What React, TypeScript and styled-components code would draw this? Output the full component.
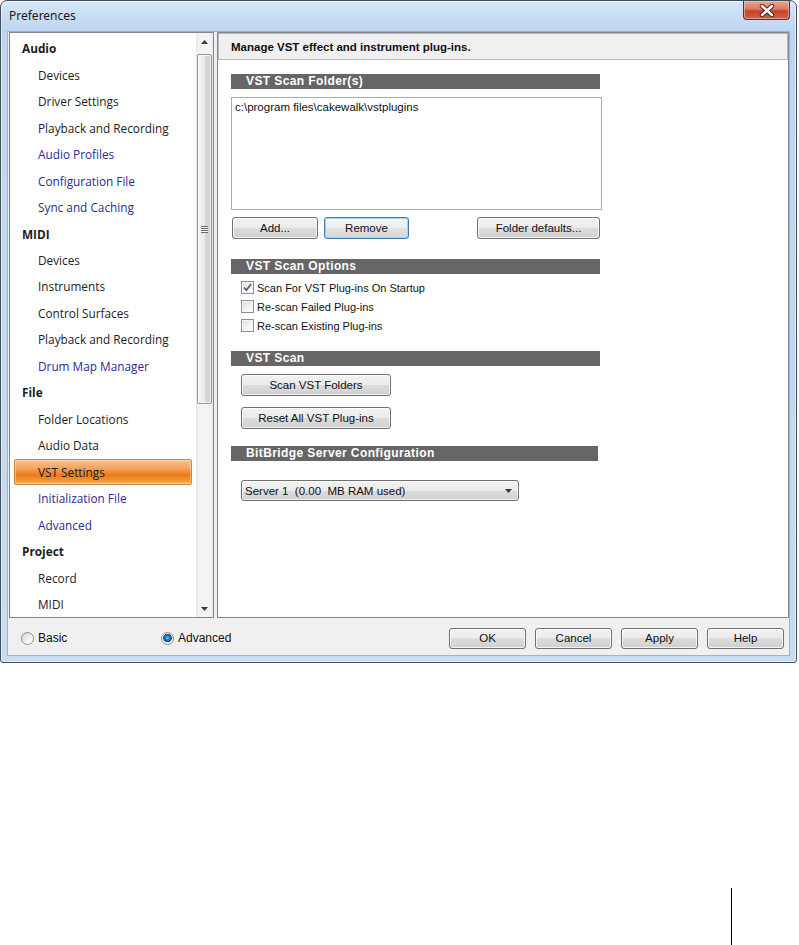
import React from "react";
import styled, { createGlobalStyle } from "styled-components";

const GlobalStyle = createGlobalStyle`
  html, body {
    margin: 0;
    padding: 0;
    background: #ffffff;
    overflow: hidden;
  }
  body {
    font-family: "Liberation Sans", Arial, sans-serif;
  }
`;

const Page = styled.div`
  width: 799px;
  height: 945px;
  display: flex;
  flex-direction: column;
`;

const Window = styled.div`
  width: 797px;
  height: 663px;
  box-sizing: border-box;
  border: 1px solid #3f4e5f;
  border-radius: 7px 7px 3px 3px;
  background: linear-gradient(180deg, #d6e7f8 0px, #bdd6f0 30px, #c6dcf2 100%);
  box-shadow: inset 0 0 0 1px rgba(255, 255, 255, 0.55);
  display: flex;
  flex-direction: column;
`;

const TitleBar = styled.div`
  height: 30px;
  display: flex;
  align-items: flex-start;
  justify-content: space-between;
  padding-left: 8px;
`;

const Title = styled.span`
  font: 12px "Noto Sans", "Open Sans", sans-serif;
  color: #1a1a1a;
  line-height: 29px;
`;

const CloseButton = styled.div`
  width: 47px;
  height: 19px;
  margin-right: 6px;
  box-sizing: border-box;
  border: 1px solid #6b2a22;
  border-top: none;
  border-radius: 0 0 4px 4px;
  background: linear-gradient(180deg, #e8a897 0%, #d77a63 45%, #c5432c 55%, #d0634a 100%);
  box-shadow: inset 0 0 0 1px rgba(255, 210, 200, 0.5);
  display: flex;
  align-items: center;
  justify-content: center;
`;

const Client = styled.div`
  flex: 1;
  margin: 0 6px 6px 6px;
  border: 1px solid #9fb3c9;
  background: #f0f0f0;
  display: flex;
  flex-direction: column;
`;

const Main = styled.div`
  height: 586px;
  display: flex;
  gap: 3px;
  padding-left: 1px;
`;

const TreePanel = styled.div`
  width: 205px;
  box-sizing: border-box;
  border: 1px solid #828790;
  background: #ffffff;
  display: flex;
`;

const TreeList = styled.div`
  flex: 1;
  padding-top: 2px;
  display: flex;
  flex-direction: column;
`;

const TreeRow = styled.div<{ $header?: boolean; $link?: boolean; $selected?: boolean }>`
  height: 26.48px;
  flex-shrink: 0;
  box-sizing: border-box;
  display: flex;
  align-items: center;
  font-family: "Open Sans", "Noto Sans", sans-serif;
  font-size: 11.8px;
  font-weight: ${(p) => (p.$header ? 700 : 400)};
  color: ${(p) => (p.$link ? "#2a2a96" : "#1c1c1c")};
  padding-left: ${(p) => (p.$header ? 12 : 28)}px;
  ${(p) =>
    p.$selected &&
    `
    margin: 0 4px 0 4px;
    padding-left: 23px;
    border: 1px solid #c9874c;
    border-radius: 2px;
    background: linear-gradient(180deg, #fac596 0%, #f4a25c 35%, #eb7a1a 62%, #f29535 85%, #f8b56c 100%);
    box-shadow: inset 0 0 0 1px rgba(255, 230, 200, 0.45);
  `}
`;

const ScrollBar = styled.div`
  width: 17px;
  background: linear-gradient(90deg, #e6e6e6 0%, #f4f4f4 20%, #f4f4f4 80%, #e9e9e9 100%);
  display: flex;
  flex-direction: column;
`;

const ScrollArrow = styled.div`
  height: 17px;
  display: flex;
  align-items: center;
  justify-content: center;
`;

const ScrollTrack = styled.div`
  flex: 1;
  padding-top: 4px;
  display: flex;
  flex-direction: column;
`;

const Thumb = styled.div`
  height: 350px;
  margin: 0 1px;
  box-sizing: border-box;
  border: 1px solid #979797;
  border-radius: 2px;
  background: linear-gradient(90deg, #f3f3f3 0%, #e9e9e9 50%, #d8d8d8 51%, #cfcfcf 100%);
  box-shadow: inset 0 0 0 1px rgba(255, 255, 255, 0.7);
  display: flex;
  align-items: center;
  justify-content: center;
`;

const Grip = styled.div`
  width: 7px;
  height: 7px;
  background: repeating-linear-gradient(180deg, #6a6a6a 0px, #6a6a6a 1px, #f4f4f4 1px, #f4f4f4 2px);
`;

const ContentPanel = styled.div`
  flex: 1;
  box-sizing: border-box;
  border: 1px solid #828790;
  background: #ffffff;
  display: flex;
  flex-direction: column;
`;

const PanelHeader = styled.div`
  height: 27px;
  box-sizing: border-box;
  border: 1px solid #b9b9b9;
  background: #f0f0f0;
  padding-left: 12px;
  display: flex;
  align-items: center;
  font: bold 11.5px "Liberation Sans", Arial, sans-serif;
  color: #111111;
`;

const PanelBody = styled.div`
  padding: 14px 0 0 13px;
  display: flex;
  flex-direction: column;
  align-items: flex-start;
`;

const SectionBar = styled.div<{ $w?: number; $mt?: number }>`
  width: ${(p) => p.$w ?? 369}px;
  height: 15px;
  margin-top: ${(p) => p.$mt ?? 0}px;
  box-sizing: border-box;
  padding-left: 15px;
  background: #666666;
  color: #ffffff;
  font: bold 12px "Liberation Sans", Arial, sans-serif;
  letter-spacing: 0.4px;
  line-height: 15px;
`;

const ListBox = styled.div`
  width: 371px;
  height: 113px;
  margin-top: 8px;
  box-sizing: border-box;
  border: 1px solid #a5acb5;
  padding: 3px 3px;
  font: 11.5px "Liberation Sans", Arial, sans-serif;
  color: #111111;
`;

const ButtonRow = styled.div`
  width: 369px;
  margin-top: 7px;
  display: flex;
  gap: 6px;
`;

const Spacer = styled.div`
  flex: 1;
`;

const Button = styled.div<{ $w: number; $h?: number; $focused?: boolean; $mt?: number; $ml?: number }>`
  width: ${(p) => p.$w}px;
  height: ${(p) => p.$h ?? 22}px;
  margin-top: ${(p) => p.$mt ?? 0}px;
  margin-left: ${(p) => p.$ml ?? 0}px;
  flex-shrink: 0;
  box-sizing: border-box;
  border: 1px solid ${(p) => (p.$focused ? "#3d7bad" : "#707070")};
  border-radius: 3px;
  background: ${(p) =>
    p.$focused
      ? "linear-gradient(180deg, #f6f6f6 0%, #eeeeee 50%, #e2e2e2 50%, #d6d6d6 100%)"
      : "linear-gradient(180deg, #f2f2f2 0%, #ebebeb 50%, #dddddd 50%, #cfcfcf 100%)"};
  box-shadow: inset 0 0 0 1px ${(p) => (p.$focused ? "#9fd6f4" : "rgba(255, 255, 255, 0.75)")};
  display: flex;
  align-items: center;
  justify-content: center;
  font: 11.5px "Liberation Sans", Arial, sans-serif;
  color: #111111;
`;

const CheckList = styled.div`
  margin-top: 4px;
  padding-left: 10px;
  display: flex;
  flex-direction: column;
`;

const CheckRow = styled.div`
  height: 19px;
  display: flex;
  align-items: center;
  gap: 3px;
  font: 11px "Liberation Sans", Arial, sans-serif;
  color: #111111;
`;

const CheckBox = styled.div`
  width: 13px;
  height: 13px;
  box-sizing: border-box;
  border: 1px solid #8e8f8f;
  background: linear-gradient(135deg, #dcdcdc 0%, #f4f4f4 60%, #ffffff 100%);
  box-shadow: inset 0 0 0 1px #f4f4f4;
  display: flex;
  align-items: center;
  justify-content: center;
`;

const Select = styled.div`
  width: 278px;
  height: 21px;
  margin: 19px 0 0 10px;
  box-sizing: border-box;
  border: 1px solid #707070;
  border-radius: 3px;
  background: linear-gradient(180deg, #f2f2f2 0%, #ebebeb 50%, #dddddd 50%, #cfcfcf 100%);
  box-shadow: inset 0 0 0 1px rgba(255, 255, 255, 0.75);
  padding: 0 6px 0 3px;
  display: flex;
  align-items: center;
  justify-content: space-between;
  font: 11.5px "Liberation Sans", Arial, sans-serif;
  color: #111111;
  white-space: pre;
`;

const Footer = styled.div`
  flex: 1;
  display: flex;
  align-items: center;
  padding: 3px 5px 0 13px;
  gap: 9px;
`;

const RadioLabel = styled.div<{ $w?: number }>`
  width: ${(p) => (p.$w ? `${p.$w}px` : "auto")};
  display: flex;
  align-items: center;
  gap: 4px;
  font: 12px "Liberation Sans", Arial, sans-serif;
  color: #111111;
`;

const Radio = styled.div<{ $on?: boolean }>`
  width: 13px;
  height: 13px;
  box-sizing: border-box;
  border-radius: 50%;
  border: 1px solid #8e8f8f;
  background: ${(p) =>
    p.$on
      ? "radial-gradient(circle at 50% 45%, #6ec0f0 0px, #1d6fb8 2.5px, #0f4f8a 4px, #e6e6e6 4.5px, #f6f6f6 6px)"
      : "linear-gradient(135deg, #d6d6d6 0%, #f2f2f2 60%, #ffffff 100%)"};
`;

const Stroke = styled.div`
  margin: 225px 0 0 731px;
  width: 1px;
  height: 57px;
  background: #000000;
`;

type TreeItem = { label: string; header?: boolean; link?: boolean; selected?: boolean };

const tree: TreeItem[] = [
  { label: "Audio", header: true },
  { label: "Devices" },
  { label: "Driver Settings" },
  { label: "Playback and Recording" },
  { label: "Audio Profiles", link: true },
  { label: "Configuration File", link: true },
  { label: "Sync and Caching", link: true },
  { label: "MIDI", header: true },
  { label: "Devices" },
  { label: "Instruments" },
  { label: "Control Surfaces" },
  { label: "Playback and Recording" },
  { label: "Drum Map Manager", link: true },
  { label: "File", header: true },
  { label: "Folder Locations" },
  { label: "Audio Data" },
  { label: "VST Settings", selected: true },
  { label: "Initialization File", link: true },
  { label: "Advanced", link: true },
  { label: "Project", header: true },
  { label: "Record" },
  { label: "MIDI" },
];

const checks = [
  { label: "Scan For VST Plug-ins On Startup", checked: true },
  { label: "Re-scan Failed Plug-ins", checked: false },
  { label: "Re-scan Existing Plug-ins", checked: false },
];

const Triangle = ({ up }: { up?: boolean }) => (
  <svg width="7" height="4" viewBox="0 0 7 4">
    <path d={up ? "M0 4 L3.5 0 L7 4 Z" : "M0 0 L3.5 4 L7 0 Z"} fill="#3a3a3a" />
  </svg>
);

export default function App() {
  return (
    <Page>
      <GlobalStyle />
      <Window>
        <TitleBar>
          <Title>Preferences</Title>
          <CloseButton>
            <svg width="16" height="13" viewBox="0 0 16 13">
              <path d="M3 2 L13 11 M13 2 L3 11" stroke="#5b231c" strokeWidth="4.4" strokeLinecap="round" />
              <path d="M3 2 L13 11 M13 2 L3 11" stroke="#ffffff" strokeWidth="2.4" strokeLinecap="round" />
            </svg>
          </CloseButton>
        </TitleBar>
        <Client>
          <Main>
            <TreePanel>
              <TreeList>
                {tree.map((item, i) => (
                  <TreeRow key={i} $header={item.header} $link={item.link} $selected={item.selected}>
                    {item.label}
                  </TreeRow>
                ))}
              </TreeList>
              <ScrollBar>
                <ScrollArrow>
                  <Triangle up />
                </ScrollArrow>
                <ScrollTrack>
                  <Thumb>
                    <Grip />
                  </Thumb>
                  <Spacer />
                  <ScrollArrow>
                    <Triangle />
                  </ScrollArrow>
                </ScrollTrack>
              </ScrollBar>
            </TreePanel>
            <ContentPanel>
              <PanelHeader>Manage VST effect and instrument plug-ins.</PanelHeader>
              <PanelBody>
                <SectionBar>VST Scan Folder(s)</SectionBar>
                <ListBox>c:\program files\cakewalk\vstplugins</ListBox>
                <ButtonRow>
                  <Button $w={86} $ml={1}>Add...</Button>
                  <Button $w={85} $focused>Remove</Button>
                  <Spacer />
                  <Button $w={123}>Folder defaults...</Button>
                </ButtonRow>
                <SectionBar $mt={20}>VST Scan Options</SectionBar>
                <CheckList>
                  {checks.map((c) => (
                    <CheckRow key={c.label}>
                      <CheckBox>
                        {c.checked && (
                          <svg width="9" height="9" viewBox="0 0 9 9">
                            <path d="M1 4.5 L3.5 7.2 L8 1" stroke="#4c5f8c" strokeWidth="1.8" fill="none" />
                          </svg>
                        )}
                      </CheckBox>
                      {c.label}
                    </CheckRow>
                  ))}
                </CheckList>
                <SectionBar $mt={16}>VST Scan</SectionBar>
                <Button $w={150} $mt={8} $ml={10}>Scan VST Folders</Button>
                <Button $w={150} $mt={11} $ml={10}>Reset All VST Plug-ins</Button>
                <SectionBar $w={367} $mt={17}>BitBridge Server Configuration</SectionBar>
                <Select>
                  <span>Server 1  (0.00  MB RAM used)</span>
                  <Triangle />
                </Select>
              </PanelBody>
            </ContentPanel>
          </Main>
          <Footer>
            <RadioLabel $w={131}>
              <Radio />
              Basic
            </RadioLabel>
            <RadioLabel>
              <Radio $on />
              Advanced
            </RadioLabel>
            <Spacer />
            <Button $w={77} $h={21}>OK</Button>
            <Button $w={77} $h={21}>Cancel</Button>
            <Button $w={77} $h={21}>Apply</Button>
            <Button $w={77} $h={21}>Help</Button>
          </Footer>
        </Client>
      </Window>
      <Stroke />
    </Page>
  );
}
